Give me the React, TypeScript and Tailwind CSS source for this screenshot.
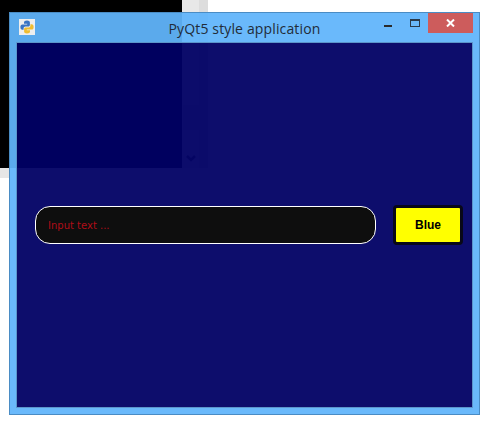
import React from "react";

// what shows through the translucent window
const Desktop = () => (
  <div className="flex flex-col h-full">
    <div className="flex h-[168px]">
      <div className="w-[182px] bg-black" />
      <div className="w-[17px] bg-[#e8e8e8] flex flex-col items-center">
        <div className="w-[16px] h-[25px] mt-[105px] bg-[#d0d0d0]" />
        <svg width="10" height="8" viewBox="0 0 10 8" className="mt-[25px] text-[#555]">
          <path d="M1 1l4 4 4-4" fill="none" stroke="currentColor" strokeWidth="2.5" />
        </svg>
      </div>
      <div className="w-[9px] bg-[#dddddd]" />
      <div className="flex-1 bg-white" />
    </div>
    <div className="flex">
      <div className="w-[9px] h-[10px] bg-[#e6e6e6]" />
    </div>
  </div>
);

const PythonIcon = () => (
  <div className="w-4 h-4 bg-[#eeeeee] flex items-center justify-center">
    <svg width="14" height="14" viewBox="0 0 14 14">
      <path d="M7 0.5C5 0.5 4 1.2 4 2.5V3.8H7.2V4.4H2.4C1.1 4.4 0.4 5.4 0.4 7.1C0.4 8.8 1.1 9.8 2.4 9.8H3.6V8.3C3.6 7.2 4.5 6.5 5.4 6.5H8.4C9.2 6.5 9.9 5.9 9.9 5V2.5C9.9 1.2 8.8 0.5 7 0.5Z" fill="#3a74c4" />
      <path d="M7 13.5C9 13.5 10 12.8 10 11.5V10.2H6.8V9.6H11.6C12.9 9.6 13.6 8.6 13.6 6.9C13.6 5.2 12.9 4.2 11.6 4.2H10.4V5.7C10.4 6.8 9.5 7.5 8.6 7.5H5.6C4.8 7.5 4.1 8.1 4.1 9V11.5C4.1 12.8 5.2 13.5 7 13.5Z" fill="#efbd30" />
    </svg>
  </div>
);

const TitleBar = () => (
  <div className="h-[29px] grid grid-cols-[1fr_auto_1fr] bg-[#61b5fb]/94">
    <div className="pl-[9px] pt-[6px]">
      <PythonIcon />
    </div>
    <span className="text-[14px] leading-[29px] pt-[1px] text-[#222c38] tracking-[0.14px] font-['Open_Sans',sans-serif]">
      PyQt5 style application
    </span>
    <div className="flex justify-end items-start pr-[6px]">
      <div className="w-[8px] h-[2px] mt-[12px] mr-[18px] bg-[#2a2a2a]" />
      <div className="w-[10px] h-[8px] mt-[6px] mr-[8px] border border-t-2 border-[#2a3a4a]" />
      <div className="w-[45px] h-[20px] bg-[#cd5c5c] flex items-center justify-center">
        <svg width="9" height="8" viewBox="0 0 9 8">
          <path d="M1 0.5l7 7M8 0.5l-7 7" stroke="#ffffff" strokeWidth="2" fill="none" />
        </svg>
      </div>
    </div>
  </div>
);

export default function App() {
  return (
    <div className="relative w-[488px] h-[425px] bg-white overflow-hidden">
      <Desktop />

      <div className="absolute left-[9px] top-[12px] w-[471px] h-[403px] border border-[#4a8cc4] flex flex-col">
        <TitleBar />
        <div className="flex h-[366px]">
          <div className="w-[6px] bg-[#61b5fb]/94" />
          <div className="w-[457px] border border-[#5b95cb] bg-[#000064]/95 flex items-center pl-[18px] pr-[9px]">
            <input
              type="text"
              placeholder="Input text ..."
              className="w-[341px] h-[38px] px-[12px] rounded-[15px] border border-white bg-[#0e0e0e] text-[10px] text-[#b00d18] placeholder:text-[#b00d18] outline-none font-['DejaVu_Sans',sans-serif]"
            />
            <button className="ml-[17px] w-[70px] h-[40px] rounded-[4px] border-[3px] border-[#080818] bg-[#ffff00] text-[12px] font-bold text-black font-['Liberation_Sans',sans-serif]">
              Blue
            </button>
          </div>
          <div className="w-[6px] bg-[#61b5fb]/94" />
        </div>
        <div className="h-[6px] bg-[#61b5fb]/94" />
      </div>
    </div>
  );
}
